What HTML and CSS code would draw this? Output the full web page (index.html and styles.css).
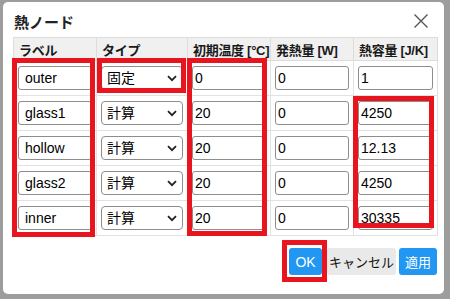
FILE: index.html
```html
<!DOCTYPE html>
<html lang="ja">
<head>
    <meta charset="UTF-8">
    <meta name="viewport" content="width=device-width, initial-scale=1.0">
    <title>熱ノード</title>
    <link rel="stylesheet" href="styles.css">
</head>
<body>
    <div class="dialog">
        <div class="dialog-head">
            <h2>熱ノード</h2>
            <button class="close-btn" type="button" aria-label="閉じる">
                <svg width="16" height="16" viewBox="0 0 16 16"><path d="M1.5 1.5l13 13M14.5 1.5l-13 13" stroke="#555" stroke-width="1.4" fill="none"/></svg>
            </button>
        </div>

        <div class="grid-wrap">
            <table class="node-table">
                <colgroup>
                    <col style="width: 83px">
                    <col style="width: 91px">
                    <col style="width: 83px">
                    <col style="width: 83px">
                    <col style="width: 84px">
                </colgroup>
                <thead>
                    <tr>
                        <th>ラベル</th>
                        <th>タイプ</th>
                        <th>初期温度 [°C]</th>
                        <th>発熱量 [W]</th>
                        <th>熱容量 [J/K]</th>
                    </tr>
                </thead>
                <tbody>
                    <tr>
                        <td><input class="label-input" type="text" value="outer"></td>
                        <td><div class="select-box"><select><option>固定</option><option>計算</option></select><svg class="chev" width="10" height="7" viewBox="0 0 10 7"><path d="M1 1.2l4 4 4-4" stroke="#222" stroke-width="1.8" fill="none"/></svg></div></td>
                        <td><input type="text" value="0"></td>
                        <td><input type="text" value="0"></td>
                        <td><input type="text" value="1"></td>
                    </tr>
                    <tr>
                        <td><input class="label-input" type="text" value="glass1"></td>
                        <td><div class="select-box"><select><option>計算</option><option>固定</option></select><svg class="chev" width="10" height="7" viewBox="0 0 10 7"><path d="M1 1.2l4 4 4-4" stroke="#222" stroke-width="1.8" fill="none"/></svg></div></td>
                        <td><input type="text" value="20"></td>
                        <td><input type="text" value="0"></td>
                        <td><input type="text" value="4250"></td>
                    </tr>
                    <tr>
                        <td><input class="label-input" type="text" value="hollow"></td>
                        <td><div class="select-box"><select><option>計算</option><option>固定</option></select><svg class="chev" width="10" height="7" viewBox="0 0 10 7"><path d="M1 1.2l4 4 4-4" stroke="#222" stroke-width="1.8" fill="none"/></svg></div></td>
                        <td><input type="text" value="20"></td>
                        <td><input type="text" value="0"></td>
                        <td><input type="text" value="12.13"></td>
                    </tr>
                    <tr>
                        <td><input class="label-input" type="text" value="glass2"></td>
                        <td><div class="select-box"><select><option>計算</option><option>固定</option></select><svg class="chev" width="10" height="7" viewBox="0 0 10 7"><path d="M1 1.2l4 4 4-4" stroke="#222" stroke-width="1.8" fill="none"/></svg></div></td>
                        <td><input type="text" value="20"></td>
                        <td><input type="text" value="0"></td>
                        <td><input type="text" value="4250"></td>
                    </tr>
                    <tr>
                        <td><input class="label-input" type="text" value="inner"></td>
                        <td><div class="select-box"><select><option>計算</option><option>固定</option></select><svg class="chev" width="10" height="7" viewBox="0 0 10 7"><path d="M1 1.2l4 4 4-4" stroke="#222" stroke-width="1.8" fill="none"/></svg></div></td>
                        <td><input type="text" value="20"></td>
                        <td><input type="text" value="0"></td>
                        <td><input type="text" value="30335"></td>
                    </tr>
                </tbody>
            </table>

            <!-- 注目箇所の赤枠 -->
            <div class="mark mark-label"></div>
            <div class="mark mark-type"></div>
            <div class="mark mark-temp"></div>
            <div class="mark mark-cap"></div>
        </div>

        <div class="dialog-foot">
            <span class="ok-frame"><button class="btn btn-primary btn-ok" type="button">OK</button></span>
            <button class="btn btn-plain" type="button">キャンセル</button>
            <button class="btn btn-primary btn-apply" type="button">適用</button>
        </div>
    </div>
</body>
</html>
```

FILE: styles.css
```css
body {
    margin: 0;
    padding: 0;
    background-color: #9d9d9d;
    font-family: 'Liberation Sans', 'Noto Sans CJK JP', sans-serif;
    color: #111;
}
.dialog {
    width: 441px;
    height: 292px;
    margin: 2px 0 0 3px;
    padding: 0 7px 0 10px;
    box-sizing: border-box;
    background-color: #fff;
    border-radius: 5px;
}
.dialog-head {
    display: flex;
    align-items: center;
    justify-content: space-between;
    height: 35px;
}
.dialog-head h2 {
    margin: 0 0 0 1px;
    padding-top: 3px;
    font-size: 15px;
    font-weight: bold;
    color: #222;
}
.close-btn {
    display: flex;
    padding: 0;
    margin: 3px 8px 0 0;
    border: none;
    background: none;
}
.grid-wrap {
    position: relative;
}
.node-table {
    width: 424px;
    table-layout: fixed;
    border-collapse: collapse;
    border: 1px solid #dcdcdc;
}
.node-table th {
    height: 22px;
    padding: 0 4px 0 5px;
    background-color: #f0f0f0;
    border: 1px solid #dcdcdc;
    text-align: left;
    font-size: 13px;
    font-weight: bold;
    letter-spacing: -0.3px;
    color: #1a1a1a;
    white-space: nowrap;
}
.node-table td {
    padding: 5px 4px;
    border: 1px solid #e2e2e2;
}
.node-table input,
.node-table select {
    display: block;
    width: 100%;
    height: 24px;
    margin: 0;
    padding: 0 2px;
    box-sizing: border-box;
    border: 1px solid #8d8d8d;
    border-radius: 3px;
    background-color: #fff;
    font-family: inherit;
    font-size: 14px;
    color: #000;
}
.node-table .label-input {
    padding-left: 6px;
}
.select-box {
    position: relative;
}
.node-table select {
    -webkit-appearance: none;
    appearance: none;
    padding-left: 5px;
    border-radius: 4px;
}
.chev {
    position: absolute;
    right: 6px;
    top: 9px;
    pointer-events: none;
}
.mark {
    position: absolute;
    border: 5px solid #e8141e;
    box-sizing: border-box;
}
.mark-label {
    left: -1px;
    top: 21px;
    width: 83px;
    height: 179px;
}
.mark-type {
    left: 84px;
    top: 21px;
    width: 89px;
    height: 35px;
}
.mark-temp {
    left: 174px;
    top: 21px;
    width: 80px;
    height: 178px;
}
.mark-cap {
    left: 340px;
    top: 59px;
    width: 81px;
    height: 132px;
}
.dialog-foot {
    display: flex;
    align-items: center;
    justify-content: flex-end;
    width: 424px;
    margin-top: 4px;
}
.ok-frame {
    display: flex;
    padding: 3px 0 2px 2px;
    border: 5px solid #e8141e;
}
.btn {
    height: 27px;
    padding: 0;
    border: none;
    border-radius: 3px;
    font-family: inherit;
    font-size: 13px;
}
.btn-primary {
    background-color: #2196f3;
    color: #fff;
}
.btn-ok {
    width: 33px;
    font-size: 14px;
}
.btn-plain {
    width: 69px;
    background-color: #e9e9e9;
    color: #111;
}
.btn-apply {
    width: 38px;
    margin-left: 3px;
}
```
